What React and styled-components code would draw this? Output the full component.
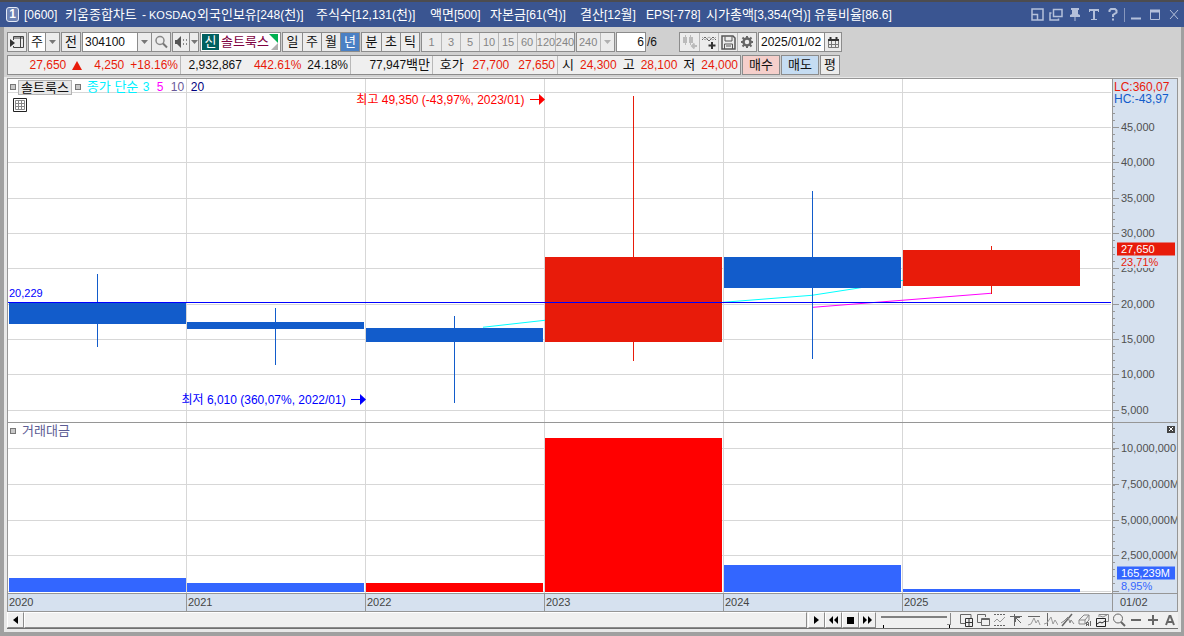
import React from "react";
import styled, { createGlobalStyle } from "styled-components";

const LINE = "#8c8c8c";
const FACE = "#ececec";
const AXIS = "#d6e1ef";
const UP = "#e81b0a";
const DOWN = "#125ccb";

const GlobalStyle = createGlobalStyle`
  * { box-sizing: border-box; }
  html, body { margin: 0; }
  body, button, input, select {
    font-family: "Liberation Sans", "Noto Sans CJK KR", sans-serif;
    font-size: 13px;
    line-height: 16px;
    color: #111;
  }
  button, input, select { margin: 0; padding: 0; border: 0; border-radius: 0; background: none; }
`;

const Window = styled.div`
  display: flex;
  flex-direction: column;
  min-height: 100vh;
  background: #d0d0d0;
  border-top: 2px solid #4c4c50;
  overflow: hidden;
`;

const TitleBar = styled.header`
  display: flex;
  align-items: center;
  height: 25px;
  flex: none;
  padding: 0 1px 0 6px;
  background: #3a5591;
  color: #fff;
  white-space: nowrap;
`;

const WindowNumber = styled.span`
  width: 13px;
  height: 15px;
  margin-right: 5px;
  border: 1px solid #e4eaf6;
  border-radius: 3px;
  background: #6e84b4;
  font-weight: bold;
  font-size: 12px;
  line-height: 13px;
  text-align: center;
`;

const TitleText = styled.h1`
  display: flex;
  flex: 1;
  margin: 0;
  font-size: 13px;
  font-weight: normal;
`;

const TitlePart = styled.span`
  flex: none;
  width: ${(p) => p.$w}px;
`;

const Latin = styled.span`
  font-size: ${(p) => p.$size || 12}px;
`;

const WindowControls = styled.div`
  display: flex;
  align-items: center;
  gap: 1px;
`;

const ControlButton = styled.button`
  display: grid;
  place-items: center;
  width: 18px;
  height: 18px;
  color: #b4c0da;
`;

const ControlDivider = styled.span`
  width: 1px;
  height: 14px;
  margin: 0 1px;
  background: #8797bd;
`;

const Frame = styled.main`
  display: flex;
  flex-direction: column;
  flex: 1;
  border: solid #a0a0a0;
  border-width: 0 3px 4px 4px;
`;

const Toolbars = styled.div`
  display: flex;
  flex-direction: column;
  gap: 3px;
  padding: 5px 3px 2px;
`;

const Toolbar = styled.div`
  display: flex;
  gap: 1px;
  height: 20px;
`;

const Group = styled.div`
  display: flex;
  flex: none;
  height: 20px;
  border: 1px solid ${LINE};
  background: ${FACE};
  > * + * { border-left: 1px solid ${(p) => p.$rule || LINE}; }
`;

const ToolButton = styled.button`
  display: grid;
  place-items: center;
  flex: none;
  width: ${(p) => p.$w || 19}px;
  height: 18px;
  white-space: nowrap;
  background: ${(p) => p.$bg || FACE};
  color: ${(p) => p.$color || "#111"};
  font-size: ${(p) => p.$size || 13}px;
`;

const MinuteButton = styled(ToolButton)`
  display: flex;
  align-items: center;
  justify-content: center;
  font-size: 11px;
  color: #858585;
  > span { margin: 0 -2px; }
`;

const Picker = styled.select`
  appearance: none;
  width: ${(p) => p.$w}px;
  height: 18px;
  padding-left: ${(p) => p.$pad || 2}px;
  background: ${(p) => p.$bg || "#fff"};
  color: ${(p) => p.$color || "#111"};
  font-size: ${(p) => p.$size || 13}px;
`;

const TextField = styled.input`
  width: ${(p) => p.$w}px;
  height: 18px;
  padding: 0 1px 0 2px;
  background: #fff;
  font-size: 12px;
  text-align: ${(p) => p.$align || "left"};
`;

const StockBox = styled.div`
  display: flex;
  flex: none;
  align-items: center;
  width: 81px;
  height: 20px;
  padding-left: 1px;
  border: 1px solid ${LINE};
  background: #fff;
  color: #800040;
  white-space: nowrap;
`;

const CreditMark = styled.span`
  width: 17px;
  height: 16px;
  margin-right: 2px;
  background: #006060;
  color: #fff;
  text-align: center;
`;

const PageCount = styled.span`
  width: 31px;
  font-size: 12px;
  line-height: 20px;
`;

const Quotes = styled.div`
  display: flex;
  flex: none;
  width: 734px;
  height: 20px;
  border: 1px solid ${LINE};
  background: #efefef;
  line-height: 18px;
  white-space: nowrap;
`;

const QuoteCell = styled.div`
  display: flex;
  flex: none;
  justify-content: flex-end;
  align-items: center;
  gap: ${(p) => p.$gap || 6}px;
  width: ${(p) => p.$w}px;
  padding-right: 2px;
  & + & { border-left: 1px solid #b8b8b8; }
`;

const Figure = styled.span`
  font-size: 12px;
  color: ${(p) => (p.$up ? UP : "#111")};
`;

const Unit = styled.span`
  font-size: 13px;
`;

const OrderButton = styled.button`
  flex: none;
  width: ${(p) => p.$w}px;
  height: 20px;
  border: 1px solid ${LINE};
  background: ${(p) => p.$bg || FACE};
`;

const ChartArea = styled.section`
  display: flex;
  flex-direction: column;
  flex: 1;
  border: solid #e8e8e8;
  border-width: 1px 3px 3px;
`;

const Panel = styled.div`
  display: flex;
  flex: ${(p) => p.$grow} 0 0;
  min-height: ${(p) => p.$min}px;
  border: 1px solid #969696;
  border-bottom: 0;
`;

const Plot = styled.div`
  position: relative;
  flex: 1;
  overflow: hidden;
  background: #fff;
`;

const Axis = styled.div`
  position: relative;
  flex: none;
  width: 65px;
  overflow: hidden;
  border-left: 1px solid #969696;
  background: ${AXIS};
`;

const Drawing = styled.svg`
  position: absolute;
  inset: 0;
  width: 100%;
  height: 100%;
  shape-rendering: crispEdges;
`;

const AxisLabel = styled.span`
  position: absolute;
  left: ${(p) => (p.$edge ? 1 : 8)}px;
  top: ${(p) => p.$top}%;
  transform: translateY(-50%);
  font-size: ${(p) => (p.$edge ? 12 : 11)}px;
  line-height: 12px;
  color: ${(p) => p.$color || "#505050"};
  background: ${AXIS};
`;

const ValueTag = styled(AxisLabel)`
  left: 4px;
  width: 58px;
  padding-left: 4px;
  line-height: 13px;
  color: #fff;
  background: ${(p) => p.$bg};
`;

const ClosePanel = styled.button`
  position: absolute;
  top: 3px;
  right: 2px;
  display: grid;
  place-items: center;
  width: 8px;
  height: 7px;
  background: #444;
`;

const Legend = styled.div`
  position: relative;
  display: flex;
  align-items: center;
  height: 16px;
  padding-left: 2px;
  white-space: nowrap;
`;

const Marker = styled.span`
  width: 6px;
  height: 6px;
  margin-right: ${(p) => p.$after || 2}px;
  border: 1px solid #777;
  background: #c8c8c8;
`;

const SeriesButton = styled.button`
  height: 15px;
  margin-right: 3px;
  padding: 0 2px;
  border: 1px solid #b4b4b4;
  background: #e8e8e8;
  line-height: 13px;
`;

const LegendItem = styled.span`
  width: ${(p) => p.$w}px;
  color: ${(p) => p.$color};
  font-size: ${(p) => p.$size || 13}px;
`;

const GridButton = styled.button`
  position: relative;
  display: block;
  width: 14px;
  height: 14px;
  margin: 3px 0 0 5px;
`;

const Note = styled.div`
  position: absolute;
  right: ${(p) => p.$right}%;
  top: ${(p) => p.$top}%;
  display: flex;
  align-items: center;
  gap: 5px;
  transform: translateY(-50%);
  font-size: 12px;
  color: ${(p) => p.$color};
  white-space: nowrap;
`;

const LevelLabel = styled.span`
  position: absolute;
  left: 1px;
  top: ${(p) => p.$top}%;
  transform: translateY(-50%);
  font-size: 11px;
  color: #00f;
`;

const DateRow = styled.div`
  display: flex;
  flex: none;
  height: 19px;
  border: 1px solid #969696;
  background: ${AXIS};
  font-size: 11px;
  line-height: 16px;
  color: #444;
`;

const Years = styled.div`
  display: grid;
  grid-template-columns: 178fr 179fr 179fr 179fr 179fr 210fr;
  flex: 1;
`;

const Year = styled.span`
  padding-left: 1px;
  & + & { border-left: 1px solid #969696; }
`;

const LastDate = styled.span`
  width: 65px;
  padding-left: 7px;
  border-left: 1px solid #969696;
`;

const BottomBar = styled.div`
  display: flex;
  flex: none;
  height: 17px;
  background: #f0f0f0;
  border-bottom: 1px solid #707070;
`;

const ScrollButton = styled.button`
  display: grid;
  place-items: center;
  width: 17px;
  height: 16px;
  border: 1px solid;
  border-color: #fff #8c8c8c #8c8c8c #fff;
  background: #f0f0f0;
`;

const ScrollThumb = styled.div`
  flex: 1;
  height: 16px;
  margin-right: 1px;
  border: 1px solid;
  border-color: #fff #8c8c8c #8c8c8c #fff;
`;

const SliderBox = styled.div`
  display: flex;
  flex-direction: column;
  justify-content: space-between;
  width: 81px;
  padding: 0 5px;
`;

const Slider = styled.input`
  appearance: none;
  display: block;
  width: 70px;
  height: 13px;
  background: linear-gradient(#808080, #808080) 0 4px / 66px 2px no-repeat;
  &::-webkit-slider-thumb {
    appearance: none;
    width: 4px;
    height: 12px;
    border: solid #888;
    border-width: 0 1px 1px 0;
    background: #f0f0f0;
  }
`;

const SliderTicks = styled.div`
  height: 3px;
  width: 67px;
  border: solid #000;
  border-width: 0 1px;
  margin-left: 2px;
`;

const ChartTools = styled.div`
  display: flex;
`;

const ChartTool = styled.button`
  display: grid;
  place-items: center;
  width: 17px;
  height: 16px;
  color: #666;
`;

const Glyph = styled.svg`
  display: block;
  fill: none;
  stroke: currentColor;
  stroke-width: 1;
`;

function Icon({ w = 14, h = 14, children }) {
  return (
    <Glyph width={w} height={h} viewBox={`0 0 ${w} ${h}`} aria-hidden="true">
      {children}
    </Glyph>
  );
}

const Caret = ({ color = "#777" }) => (
  <Icon w={7} h={4}><path d="M0 0h7L3.500 4z" fill={color} stroke="none" /></Icon>
);

const TITLE = [
  { text: "[0600]", w: 41 },
  { text: "키움종합차트", w: 77 },
  { text: "-", w: 7 },
  { text: "KOSDAQ", w: 48, size: 11 },
  { text: "외국인보유[248(천)]", w: 119 },
  { text: "주식수[12,131(천)]", w: 114 },
  { text: "액면[500]", w: 60 },
  { text: "자본금[61(억)]", w: 90 },
  { text: "결산[12월]", w: 66 },
  { text: "EPS[-778]", w: 60 },
  { text: "시가총액[3,354(억)]", w: 108 },
  { text: "유통비율[86.6]", w: 96 },
];

// Hangul keeps the heading size, every other run is set smaller.
const splitRuns = (text) => text.match(/[가-힣]+|[^가-힣]+/g);

const CONTROLS = [
  ["축소", <Icon w={13} h={13}><path d="M1 1h11v11H1zM1 6.500h5.500V12" strokeWidth="1.500" /></Icon>],
  ["복사", <Icon w={14} h={13}><path d="M4.500 1.500h8.500v7H4.500zM2.500 5H1v7h8.500v-1.500" strokeWidth="1.500" /></Icon>],
  ["고정", <Icon w={12} h={15}><path d="M2 1h8v2H9v4l2 1v2H1V8l2-1V3H2zM5.500 10h1v4h-1z" fill="currentColor" stroke="none" /></Icon>],
  ["글꼴", <Icon w={12} h={13}><path d="M1 1h10v3h-1V3H7v8h2v1H3v-1h2V3H2v1H1z" fill="currentColor" stroke="none" /></Icon>],
  ["도움말", <Icon w={10} h={13}><path d="M1.500 4V2.500L3 1h4l1.500 1.500v2L5 7v2M5 10.500V12.500" strokeWidth="2" /></Icon>],
];

const SIZERS = [
  ["최소화", <Icon w={12} h={13}><path d="M1 10.500h10" strokeWidth="2" /></Icon>],
  ["최대화", <Icon w={12} h={13}><path d="M1.500 2v9.500h9V2" /><path d="M1 3h10" strokeWidth="3" /></Icon>],
  ["닫기", <Icon w={10} h={11}><path d="M1 1l8 9M9 1L1 10" /></Icon>],
];

const WIDE_ICONS = {
  panel: (
    <Icon w={16} h={16}>
      <path d="M4.500 6V2.500h10v11h-10V12M11.500 3v10M5 4h9" stroke="#444" />
      <path d="M1 5v8l5-4z" fill="#333" stroke="none" />
    </Icon>
  ),
  search: <Icon w={14} h={14}><circle cx="6" cy="5.500" r="4" stroke="#888" strokeWidth="1.500" /><path d="M9 8.500l4 4" stroke="#777" strokeWidth="2" /></Icon>,
  sound: <Icon w={14} h={12}><path d="M1 4h2l4-4v12L3 8H1z" fill="#555" stroke="none" /><path d="M9.500 3v2M9.500 7v2M12.500 3v2M12.500 7v2" stroke="#888" /></Icon>,
  candles: <Icon w={16} h={14}><path d="M3.500 0v10M8.500 0v10" stroke="#bbb" /><path d="M1 2h4v6H1zM7 2h4v6H7z" fill="#bbb" stroke="none" /><path d="M10 11h5M12.500 8.500L10 11l2.500 2.500" stroke="#bbb" strokeWidth="2" /></Icon>,
  addLine: <Icon w={16} h={14}><path d="M1 5l3-3 4 4 4-4 3 3" stroke="#666" /><path d="M1 2l3 3 4-3 4 3 3-3" stroke="#aaa" /><path d="M11 7v7M7.500 10.500h7" stroke="#333" strokeWidth="2" /></Icon>,
  save: <Icon w={15} h={15}><path d="M1 1h11l2 2v11H1z" stroke="#555" strokeWidth="1.500" /><path d="M4 1.500V6h7V1.500M3.500 14V9h8v5M5 11h5" stroke="#555" /></Icon>,
  gear: <Icon w={14} h={14}><circle cx="7" cy="7" r="3.500" stroke="#666" strokeWidth="2.500" /><path d="M7 1v2M7 11v2M1 7h2M11 7h2M2.500 2.500l2 2M9.500 9.500l2 2M11.500 2.500l-2 2M4.500 9.500l-2 2" stroke="#666" strokeWidth="2" /></Icon>,
  calendar: <Icon w={13} h={13}><path d="M1.500 3.500h10v8h-10zM4.500 5v6M8.500 5v6M2 8.500h9" stroke="#777" /><path d="M1 4h11M3.500 1v2M9.500 1v2" stroke="#333" strokeWidth="2" /></Icon>,
};

const TOOLS = [
  ["격자 추가", <Icon><path d="M12 5V1.500H1.500v9H6" /><path d="M6.500 5.500h7v8h-7zM10 6v7M7 9.500h6" stroke="#333" /></Icon>],
  ["창 겹치기", <Icon><path d="M5 9.500H1.500v-8h8V4" /><path d="M5.500 5.500h8v7h-8zM6 6.500h7" /></Icon>],
  ["추세 영역", <Icon><path d="M1 1.500h12M1 12.500h12" strokeDasharray="2 1" /><path d="M1 9l3-3 3 3 5-5" stroke="#999" /></Icon>],
  ["십자선", <Icon><path d="M0 3.500h12M4.500 1v12M5 4l6 6M5.500 9V4.500H10" /></Icon>],
  ["수평선", <Icon><path d="M1 3.500h12" /><path d="M1 12l3-1 3-6 2 5 2-3 2 5" stroke="#999" /></Icon>],
  ["수직선", <Icon><path d="M3.500 0v13" /><path d="M0 11l3-1 4-6 2 7 2-4 3 5" stroke="#999" /></Icon>],
  ["추세선", <Icon><path d="M1 13L11 1" strokeWidth="1.500" /><path d="M0 10l3-2 4-4 2 6 1-3 3 4" stroke="#888" /></Icon>],
  ["전체 지우기", <Icon><path d="M1 7l5-5h5l-4 5zM1 7v4h6V7M7 11l4-4V2" stroke="#888" /><path d="M8.500 13V9.500h2V13M8.500 11.500h2M12.500 8v5" /></Icon>],
  ["차트 겹치기", <Icon><path d="M4 4V1.500h9.500v7H11M5 3l3 1 4-2" stroke="#888" /><path d="M1.500 5.500h9v8h-9zM2 11l3-2 2 1 3-2" stroke="#222" /></Icon>],
  ["돋보기", <Icon><circle cx="6" cy="5.500" r="4.500" /><path d="M9 9l4 4" strokeWidth="2" /></Icon>],
  ["축소", <Icon><path d="M2 7h10" strokeWidth="2" /></Icon>],
  ["확대", <Icon><path d="M2 7h10M7 2v10" strokeWidth="2" /></Icon>],
  ["자동", <Icon><path d="M3 12L6.500 3h1L11 12M4.500 9h5" strokeWidth="2" /></Icon>],
];

const MINUTES = ["1", "3", "5", "10", "15", "60", "120", "240"];
const COLUMNS = [186, 365, 544, 723, 902];

const PRICE_TOP = 79;
const PRICE_HEIGHT = 343;
const priceTicks = [50000, 45000, 40000, 35000, 30000, 25000, 20000, 15000, 10000, 5000].map((value) => ({
  value,
  y: Math.floor(410 - ((value - 5000) * 318) / 45000),
}));
const pricePct = (y) => ((y - PRICE_TOP) / PRICE_HEIGHT) * 100;

const CANDLES = [
  { x: 9, top: 303, bottom: 324, wick: 97, high: 274, low: 347 },
  { x: 187, top: 322, bottom: 329, wick: 275, high: 308, low: 365 },
  { x: 366, top: 328, bottom: 342, wick: 454, high: 316, low: 403 },
  { x: 545, top: 257, bottom: 342, wick: 633, high: 96, low: 361, up: true },
  { x: 724, top: 257, bottom: 288, wick: 812, high: 191, low: 359 },
  { x: 903, top: 250, bottom: 286, wick: 991, high: 246, low: 294, up: true },
];

const VOLUME_TOP = 423;
const VOLUME_HEIGHT = 170;
const volumePct = (y) => ((y - VOLUME_TOP) / VOLUME_HEIGHT) * 100;
const volumeTicks = [
  ["10,000,000", 448], ["7,500,000M", 484], ["5,000,000M", 520], ["2,500,000M", 555],
];

const VOLUMES = [
  { x: 9, top: 578 },
  { x: 187, top: 583 },
  { x: 366, top: 583, up: true },
  { x: 545, top: 438, up: true },
  { x: 724, top: 565 },
  { x: 903, top: 589 },
];

function minorTicks(from, to, origin) {
  const step = 318 / 45;
  const ticks = [];
  for (let i = -80; i < 80; i += 1) {
    const y = Math.floor(origin + i * step);
    if (y > from && y < to) ticks.push(y);
  }
  return ticks;
}

function Grid({ rows, top, bottom }) {
  return (
    <g fill="#d7d7d7">
      {rows.map((y) => <rect key={y} x="8" y={y} width="1103" height="1" />)}
      {COLUMNS.map((x) => <rect key={x} x={x} y={top} width="1" height={bottom - top} />)}
    </g>
  );
}

function PriceChart() {
  return (
    <Drawing viewBox="8 79 1104 343" preserveAspectRatio="none">
      <Grid rows={priceTicks.map((t) => t.y)} top={79} bottom={422} />
      <path d="M483 327.500L545 320.500M723 302.500L812 295.500L857 288.500L903 280.500" fill="none" stroke="#00ffff" />
      {CANDLES.map((c) => (
        <g key={c.x} fill={c.up ? UP : DOWN}>
          <rect x={c.x} y={c.top} width="177" height={c.bottom - c.top} />
          <rect x={c.wick} y={c.high} width="1" height={c.low - c.high} />
        </g>
      ))}
      <path d="M813 307.500L991 293.500" fill="none" stroke="#ff00ff" />
      <rect x="8" y="302" width="1103" height="1" fill="#0000ff" />
    </Drawing>
  );
}

function VolumeChart() {
  return (
    <Drawing viewBox="8 423 1104 170" preserveAspectRatio="none">
      <Grid rows={[...volumeTicks.map((t) => t[1]), 591]} top={423} bottom={593} />
      {VOLUMES.map((v) => (
        <rect key={v.x} x={v.x} y={v.top} width="177" height={592 - v.top} fill={v.up ? "#ff0000" : "#3366ff"} />
      ))}
    </Drawing>
  );
}

function AxisTicks({ top, height, minor, major }) {
  return (
    <Drawing viewBox={`0 ${top} 64 ${height}`} preserveAspectRatio="none" fill="#969696">
      {minor.map((y) => <rect key={y} x="0" y={y} width="2" height="1" />)}
      {major.map((y) => <rect key={y} x="0" y={y} width="6" height="1" />)}
    </Drawing>
  );
}

const Arrow = () => (
  <Icon w={15} h={11}><path d="M0 5.500h10" /><path d="M9 0v11l6-5.500z" fill="currentColor" stroke="none" /></Icon>
);

export default function App() {
  return (
    <Window>
      <GlobalStyle />
      <TitleBar>
        <WindowNumber>1</WindowNumber>
        <TitleText>
          {TITLE.map((part) => (
            <TitlePart key={part.text} $w={part.w}>
              {splitRuns(part.text).map((run, i) => (
                /[가-힣]/.test(run) ? run : <Latin key={i} $size={part.size}>{run}</Latin>
              ))}
            </TitlePart>
          ))}
        </TitleText>
        <WindowControls>
          {CONTROLS.map(([name, icon]) => <ControlButton key={name} aria-label={name}>{icon}</ControlButton>)}
          <ControlDivider />
          {SIZERS.map(([name, icon]) => <ControlButton key={name} aria-label={name}>{icon}</ControlButton>)}
        </WindowControls>
      </TitleBar>

      <Frame>
        <Toolbars>
          <Toolbar>
            <Group><ToolButton $w={18} aria-label="패널">{WIDE_ICONS.panel}</ToolButton></Group>
            <Group>
              <Picker $w={16} aria-label="종류" defaultValue="주"><option>주</option></Picker>
              <ToolButton $w={14} aria-label="종류 열기"><Caret /></ToolButton>
            </Group>
            <Group><ToolButton $w={18}>전</ToolButton></Group>
            <Group>
              <TextField $w={54} aria-label="종목코드" defaultValue="304100" />
              <ToolButton $w={14} aria-label="종목 목록"><Caret /></ToolButton>
              <ToolButton $w={19} aria-label="종목 검색">{WIDE_ICONS.search}</ToolButton>
            </Group>
            <Group>
              <ToolButton $w={16} aria-label="소리">{WIDE_ICONS.sound}</ToolButton>
              <ToolButton $w={9} aria-label="소리 설정"><Caret /></ToolButton>
            </Group>
            <StockBox>
              <CreditMark>신</CreditMark>솔트룩스
              <Icon w={9} h={16}><path d="M0 0h9v9z" fill="#00b050" stroke="none" /><path d="M9 9v7H2z" fill="#b0b0b0" stroke="none" /></Icon>
            </StockBox>
            <Group>
              {["일", "주", "월", "년"].map((t) => (
                <ToolButton key={t} $bg={t === "년" ? "#4a80c4" : undefined} $color={t === "년" ? "#fff" : undefined}>{t}</ToolButton>
              ))}
            </Group>
            <Group>{["분", "초", "틱"].map((t) => <ToolButton key={t}>{t}</ToolButton>)}</Group>
            <Group $rule="#b8b8b8">{MINUTES.map((t) => <MinuteButton key={t}><span>{t}</span></MinuteButton>)}</Group>
            <Group $rule="#b8b8b8">
              <Picker $w={23} $size={11} $bg={FACE} $color="#858585" aria-label="분 단위" defaultValue="240"><option>240</option></Picker>
              <ToolButton $w={14} aria-label="분 단위 열기"><Caret color="#b0b0b0" /></ToolButton>
            </Group>
            <Group><TextField $w={28} $align="right" aria-label="페이지" defaultValue="6" /></Group>
            <PageCount>/6</PageCount>
            <Group $rule="#b8b8b8">
              <ToolButton aria-label="캔들">{WIDE_ICONS.candles}</ToolButton>
              <ToolButton aria-label="지표 추가">{WIDE_ICONS.addLine}</ToolButton>
              <ToolButton aria-label="저장">{WIDE_ICONS.save}</ToolButton>
              <ToolButton aria-label="설정">{WIDE_ICONS.gear}</ToolButton>
            </Group>
            <Group>
              <TextField $w={65} aria-label="기준일" defaultValue="2025/01/02" />
              <ToolButton $w={17} aria-label="달력">{WIDE_ICONS.calendar}</ToolButton>
            </Group>
          </Toolbar>

          <Toolbar>
            <Quotes>
              <QuoteCell $w={172}>
                <Figure $up>27,650</Figure>
                <Icon w={10} h={9}><path d="M5 0l5 9H0z" fill={UP} stroke="none" /></Icon>
                <Figure />
                <Figure $up>4,250</Figure>
                <Figure $up>+18.16%</Figure>
              </QuoteCell>
              <QuoteCell $w={170}>
                <Figure>2,932,867</Figure><Figure />
                <Figure $up>442.61%</Figure>
                <Figure>24.18%</Figure>
              </QuoteCell>
              <QuoteCell $w={82}><Figure>77,947<Unit>백만</Unit></Figure></QuoteCell>
              <QuoteCell $w={125} $gap={9}><span>호가</span><Figure $up>27,700</Figure><Figure $up>27,650</Figure></QuoteCell>
              <QuoteCell $w={183}>
                <span>시</span><Figure $up>24,300</Figure>
                <span>고</span><Figure $up>28,100</Figure>
                <span>저</span><Figure $up>24,000</Figure>
              </QuoteCell>
            </Quotes>
            <OrderButton $w={38} $bg="#f5cfcb">매수</OrderButton>
            <OrderButton $w={38} $bg="#c5dcf2">매도</OrderButton>
            <OrderButton $w={20}>평</OrderButton>
          </Toolbar>
        </Toolbars>

        <ChartArea>
          <Panel $grow={344} $min={200}>
            <Plot>
              <PriceChart />
              <Legend>
                <Marker />
                <SeriesButton>솔트룩스</SeriesButton>
                <Marker $after={6} />
                <LegendItem $w={56} $color="#00f0ff">종가 단순</LegendItem>
                <LegendItem $w={14} $size={12} $color="#00f0ff">3</LegendItem>
                <LegendItem $w={14} $size={12} $color="#ff00ff">5</LegendItem>
                <LegendItem $w={20} $size={12} $color="#6a5a9a">10</LegendItem>
                <LegendItem $w={20} $size={12} $color="#000080">20</LegendItem>
              </Legend>
              <GridButton aria-label="데이터 표">
                <Icon><path d="M.5.5h13v13H.5z" stroke="#222" /><path d="M2.500 2.500h9v9h-9zM3 5.500h8M3 8.500h8M5.500 3v8M8.500 3v8" stroke="#888" /></Icon>
              </GridButton>
              <Note $right={51.4} $top={pricePct(100)} $color="#f00">최고 49,350 (-43,97%, 2023/01)<Arrow /></Note>
              <Note $right={67.6} $top={pricePct(400)} $color="#00f">최저 6,010 (360,07%, 2022/01)<Arrow /></Note>
              <LevelLabel $top={pricePct(293)}>20,229</LevelLabel>
            </Plot>
            <Axis>
              <AxisTicks top={79} height={343} minor={minorTicks(104, 422, 410)} major={priceTicks.slice(1).map((t) => t.y)} />
              {priceTicks.slice(1).map((t) => (
                <AxisLabel key={t.value} $top={pricePct(t.y)}>{t.value.toLocaleString("en-US")}</AxisLabel>
              ))}
              <AxisLabel $edge $top={pricePct(87)} $color={UP}>LC:360,07</AxisLabel>
              <AxisLabel $edge $top={pricePct(99)} $color={DOWN}>HC:-43,97</AxisLabel>
              <AxisLabel $top={pricePct(262)} $color={UP}>23,71%</AxisLabel>
              <ValueTag $top={pricePct(249)} $bg={UP}>27,650</ValueTag>
            </Axis>
          </Panel>

          <Panel $grow={171} $min={110}>
            <Plot>
              <VolumeChart />
              <Legend>
                <Marker $after={6} />
                <LegendItem $w={60} $color="#5c5c94">거래대금</LegendItem>
              </Legend>
            </Plot>
            <Axis>
              <AxisTicks top={423} height={170} minor={minorTicks(424, 592, 591)} major={[...volumeTicks.map((t) => t[1]), 591]} />
              {volumeTicks.map(([label, y]) => <AxisLabel key={label} $top={volumePct(y)}>{label}</AxisLabel>)}
              <ValueTag $top={volumePct(573)} $bg="#3366ff">165,239M</ValueTag>
              <AxisLabel $top={volumePct(586)} $color="#3366ff">8,95%</AxisLabel>
              <ClosePanel aria-label="닫기">
                <Icon w={4} h={4}><path d="M0 0l4 4M4 0L0 4" stroke="#fff" /></Icon>
              </ClosePanel>
            </Axis>
          </Panel>

          <DateRow>
            <Years>{[2020, 2021, 2022, 2023, 2024, 2025].map((y) => <Year key={y}>{y}</Year>)}</Years>
            <LastDate>01/02</LastDate>
          </DateRow>

          <BottomBar>
            <ScrollButton aria-label="왼쪽"><Icon w={5} h={8}><path d="M5 0v8L0 4z" fill="#000" stroke="none" /></Icon></ScrollButton>
            <ScrollThumb />
            <ScrollButton aria-label="오른쪽"><Icon w={5} h={8}><path d="M0 0v8l5-4z" fill="#000" stroke="none" /></Icon></ScrollButton>
            <ScrollButton aria-label="뒤로"><Icon w={9} h={8}><path d="M4 0v8L0 4zM9 0v8L5 4z" fill="#000" stroke="none" /></Icon></ScrollButton>
            <ScrollButton aria-label="정지"><Icon w={7} h={7}><path d="M0 0h7v7H0z" fill="#000" stroke="none" /></Icon></ScrollButton>
            <ScrollButton aria-label="앞으로"><Icon w={9} h={8}><path d="M0 0v8l4-4zM5 0v8l4-4z" fill="#000" stroke="none" /></Icon></ScrollButton>
            <SliderBox>
              <Slider type="range" aria-label="확대 비율" defaultValue="100" />
              <SliderTicks />
            </SliderBox>
            <ChartTools>
              {TOOLS.map(([name, icon]) => <ChartTool key={name} aria-label={name}>{icon}</ChartTool>)}
            </ChartTools>
          </BottomBar>
        </ChartArea>
      </Frame>
    </Window>
  );
}
